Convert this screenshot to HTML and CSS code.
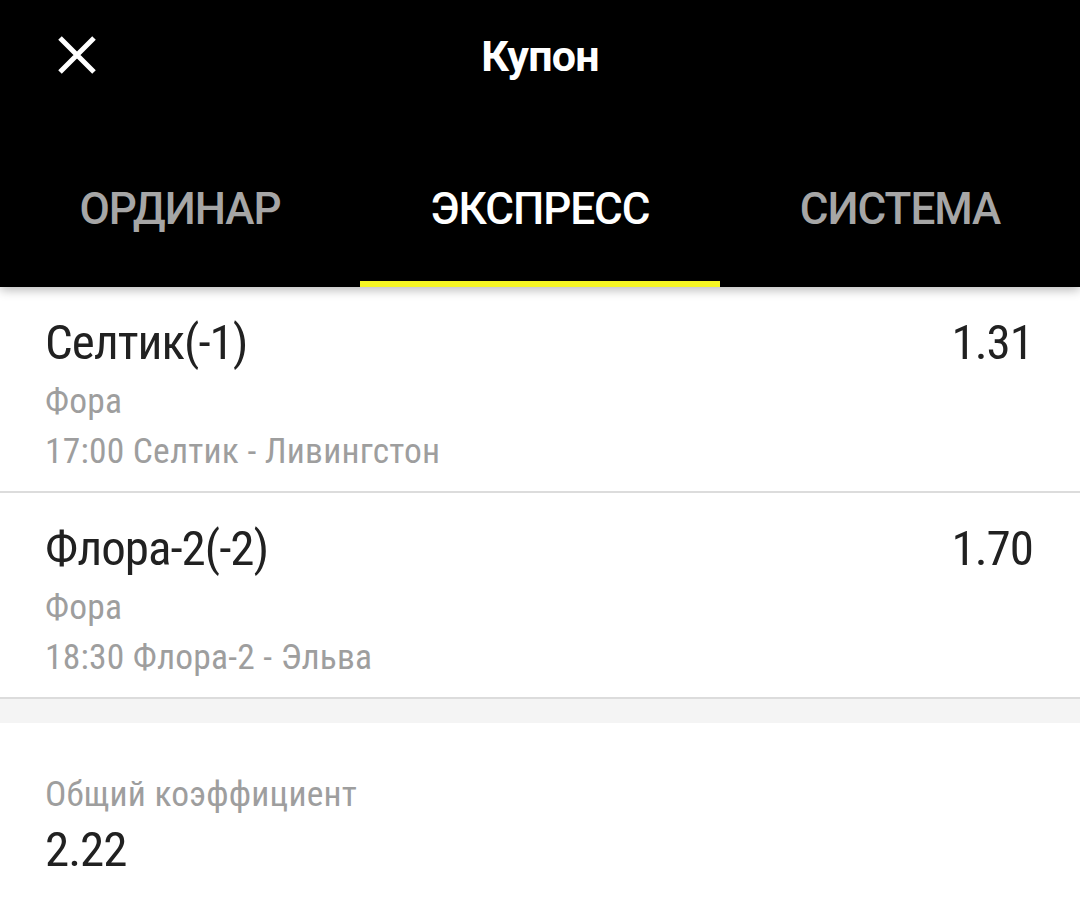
FILE: index.html
```html
<!DOCTYPE html>
<html lang="ru">
<head>
    <meta charset="UTF-8">
    <meta name="viewport" content="width=device-width, initial-scale=1.0">
    <title>Купон</title>
    <link rel="stylesheet" href="styles.css">
</head>
<body>

    <!-- Header -->
    <div class="header">
        <div class="toolbar">
            <div class="close-btn">
                <svg width="38" height="38" viewBox="0 0 38 38">
                    <path d="M2 2 L36 36 M36 2 L2 36" stroke="#fff" stroke-width="5" fill="none"/>
                </svg>
            </div>
            <div class="toolbar-title">Купон</div>
            <div></div>
        </div>

        <!-- Tabs -->
        <div class="tabs">
            <div class="tab">ОРДИНАР</div>
            <div class="tab active">ЭКСПРЕСС</div>
            <div class="tab">СИСТЕМА</div>
        </div>
    </div>

    <!-- Bets -->
    <div class="bet">
        <div class="bet-row">
            <span class="bet-name">Селтик(-1)</span>
            <span class="bet-odds">1.31</span>
        </div>
        <div class="bet-sub">Фора</div>
        <div class="bet-sub">17:00 Селтик - Ливингстон</div>
    </div>

    <div class="bet">
        <div class="bet-row">
            <span class="bet-name">Флора-2(-2)</span>
            <span class="bet-odds">1.70</span>
        </div>
        <div class="bet-sub">Фора</div>
        <div class="bet-sub">18:30 Флора-2 - Эльва</div>
    </div>

    <div class="spacer"></div>

    <!-- Total -->
    <div class="total">
        <div class="total-label">Общий коэффициент</div>
        <div class="total-value">2.22</div>
    </div>

</body>
</html>
```

FILE: styles.css
```css
/* Base */
body {
    margin: 0;
    background-color: #fff;
    font-family: Roboto, "Noto Sans", sans-serif;
    color: #212121;
}

/* Narrow text for the coupon body */
.bet,
.total {
    font-family: "Roboto Condensed", Roboto, "Noto Sans", sans-serif;
    font-stretch: 87.5%;
}

/* Header */
.header {
    position: relative;
    z-index: 1;
    background-color: #000;
    color: #fff;
    box-shadow: 0 3px 10px rgba(0, 0, 0, 0.28);
}

.toolbar {
    height: 110px;
    display: grid;
    grid-template-columns: 1fr auto 1fr;
    align-items: center;
}

.close-btn {
    padding-left: 58px;
    display: flex;
    align-items: center;
}

.toolbar-title {
    padding-top: 3px;
    font-size: 43px;
    font-weight: 700;
    line-height: 1;
    letter-spacing: -0.8px;
}

/* Tabs */
.tabs {
    display: flex;
    height: 177px;
}

.tab {
    flex: 1 1 0%;
    display: flex;
    align-items: center;
    justify-content: center;
    padding-top: 26px;
    box-sizing: border-box;
    border-bottom: 6px solid transparent;
    font-size: 44px;
    font-weight: 500;
    line-height: 1;
    letter-spacing: -1px;
    color: #a6a6a6;
}

.tab.active {
    color: #fff;
    border-bottom-color: #f5f523;
}

/* Bet rows */
.bet {
    padding: 26px 47px 15px 45px;
    border-bottom: 2px solid #dcdcdc;
}

.bet-row {
    display: flex;
    justify-content: space-between;
    font-size: 49px;
    line-height: 60px;
    letter-spacing: -1px;
    margin-bottom: 3px;
}

.bet-sub {
    font-size: 35.5px;
    line-height: 50px;
    letter-spacing: 0.2px;
    color: #9e9e9e;
}

.spacer {
    height: 24px;
    background-color: #f4f4f4;
}

/* Total */
.total {
    padding: 46px 45px 0;
}

.total-label {
    font-size: 35.5px;
    line-height: 50px;
    letter-spacing: 0.2px;
    color: #9e9e9e;
}

.total-value {
    font-size: 49px;
    line-height: 60px;
    letter-spacing: -1px;
    margin-top: 1px;
}
```
